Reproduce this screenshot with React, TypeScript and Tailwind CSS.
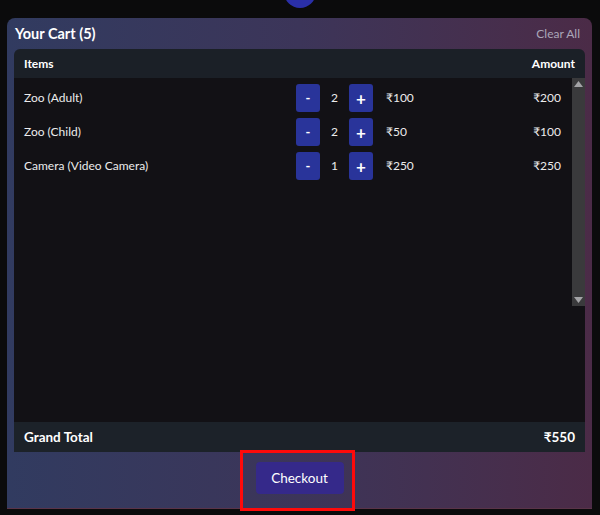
import React from "react";

type Item = { name: string; qty: number; price: number };

const items: Item[] = [
  { name: "Zoo (Adult)", qty: 2, price: 100 },
  { name: "Zoo (Child)", qty: 2, price: 50 },
  { name: "Camera (Video Camera)", qty: 1, price: 250 },
];

const font = { fontFamily: "Lato, 'Noto Sans', sans-serif" };

export default function App() {
  const total = items.reduce((s, i) => s + i.qty * i.price, 0);

  return (
    <div className="relative w-[600px] h-[515px] bg-[#0b0b0c] overflow-hidden flex flex-col" style={font}>
      {/* top decoration */}
      <div className="h-[18px] flex justify-center overflow-hidden">
        <div className="w-[32px] h-[32px] -mt-[24px] rounded-full bg-[#2a2fa8]" />
      </div>

      {/* Cart card */}
      <div className="ml-[7px] mr-[8px] h-[491px] rounded-t-lg bg-linear-to-r from-[#313b60] via-[#3c3559] to-[#4b2b47] flex flex-col border-b border-[#5a3448]">
        {/* Header */}
        <div className="h-[31px] flex items-center justify-between pl-[8px] pr-[12px]">
          <h2 className="text-[14.5px] font-bold text-white">Your Cart ({items.reduce((s, i) => s + i.qty, 0)})</h2>
          <button className="text-[12px] text-[#aaa6b8]">Clear All</button>
        </div>

        {/* Table */}
        <div className="mx-[7px] h-[403px] flex flex-col rounded-t-md overflow-hidden">
          <div className="h-[29px] shrink-0 bg-[#1b2027] flex items-center justify-between px-[10px] text-[12px] font-bold text-white">
            <span>Items</span>
            <span>Amount</span>
          </div>

          <div className="flex-1 bg-[#121115] flex flex-col">
            <div className="h-[228px] flex">
              <div className="flex-1 pt-[3px]">
                {items.map((item) => (
                  <div key={item.name} className="h-[34px] flex items-center pl-[10px] pr-[11px] text-[12px] text-[#ececec]">
                    <span className="w-[272px]">{item.name}</span>
                    <button className="w-[24px] h-[28px] rounded-[3px] bg-[#29349a] text-white font-bold text-[13px] leading-none">-</button>
                    <span className="w-[29px] text-center">{item.qty}</span>
                    <button className="w-[24px] h-[28px] rounded-[3px] bg-[#29349a] text-white font-bold text-[17px] leading-none">+</button>
                    <span className="ml-[13px] flex-1">₹{item.price}</span>
                    <span>₹{item.qty * item.price}</span>
                  </div>
                ))}
              </div>
              {/* scrollbar */}
              <div className="w-[13px] bg-[#3a3a3c] flex flex-col items-center justify-between py-[3px]">
                <svg width="9" height="6" viewBox="0 0 9 6">
                  <polygon points="4.5,0 9,6 0,6" fill="#a3a3a6" />
                </svg>
                <svg width="9" height="6" viewBox="0 0 9 6">
                  <polygon points="0,0 9,0 4.5,6" fill="#a3a3a6" />
                </svg>
              </div>
            </div>
          </div>

          <div className="h-[30px] shrink-0 bg-[#1c2229] flex items-center justify-between px-[10px] text-[13.5px] font-bold text-white">
            <span>Grand Total</span>
            <span>₹{total}</span>
          </div>
        </div>

        {/* Footer */}
        <div className="flex-1 flex items-start justify-center pt-[10px]">
          <button className="w-[88px] h-[32px] rounded-[4px] bg-[#35298a] text-white text-[13.5px]">Checkout</button>
        </div>
      </div>

      {/* annotation highlight */}
      <div className="absolute left-[240px] top-[450px] w-[115px] h-[61px] border-[3px] border-[#ff0a0a]" />
    </div>
  );
}
